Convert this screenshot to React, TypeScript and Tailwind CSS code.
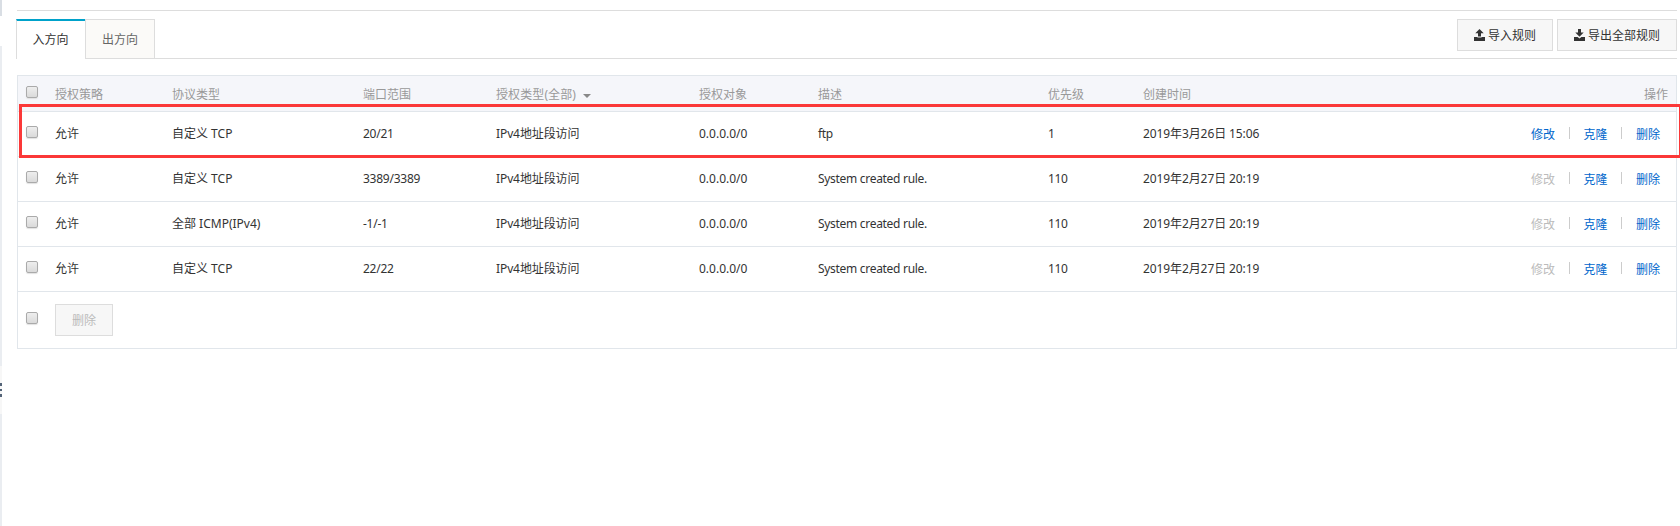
import React from "react";

type Rule = {
  protocol: string;
  port: string;
  description: string;
  priority: string;
  created: string;
  editable: boolean;
};

const rules: Rule[] = [
  { protocol: "自定义 TCP", port: "20/21", description: "ftp", priority: "1", created: "2019年3月26日 15:06", editable: true },
  { protocol: "自定义 TCP", port: "3389/3389", description: "System created rule.", priority: "110", created: "2019年2月27日 20:19", editable: false },
  { protocol: "全部 ICMP(IPv4)", port: "-1/-1", description: "System created rule.", priority: "110", created: "2019年2月27日 20:19", editable: false },
  { protocol: "自定义 TCP", port: "22/22", description: "System created rule.", priority: "110", created: "2019年2月27日 20:19", editable: false },
];

const columns = "grid grid-cols-[37px_117px_191px_133px_203px_119px_230px_95px_1fr]";

function Checkbox({ className = "" }: { className?: string }) {
  return (
    <input
      type="checkbox"
      className={`ml-2 block size-3 appearance-none rounded-[2px] border border-[#aaaaaa] bg-linear-to-b from-[#eeeeee] to-[#dadada] shadow-[0_1px_1px_#e2e2e2] ${className}`}
    />
  );
}

function TransferIcon({ down = false }: { down?: boolean }) {
  return (
    <svg width="12" height="12" viewBox="0 0 12 12" fill="#333" className="shrink-0">
      <path d={down ? "M4 0h3v3.5h2.7L5.5 7.7 1.3 3.5H4z" : "M5.5 0l4.2 4.2H7V7.4H4V4.2H1.3z"} />
      <path d={down ? "M0 8h3.6L5.5 9.4 7.4 8H11v4H0z" : "M0 8h3.4v.6h4.2V8H11v4H0z"} />
    </svg>
  );
}

function Separator() {
  return <span className="-mt-[5px] h-3 w-px bg-[#cccccc]" />;
}

function RuleRow({ rule }: { rule: Rule }) {
  return (
    <div className={`${columns} h-[45px] border-b border-[#e1e6eb] leading-[18px]`}>
      <Checkbox className="mt-[14px]" />
      <span className="pt-[13px]">允许</span>
      <span className="pt-[13px]">{rule.protocol}</span>
      <span className="pt-[13px] tracking-[-0.25px]">{rule.port}</span>
      <span className="pt-[13px] tracking-[-0.1px]">IPv4地址段访问</span>
      <span className="pt-[13px]">0.0.0.0/0</span>
      <span className="pt-[13px] tracking-[-0.3px]">{rule.description}</span>
      <span className="pt-[13px] tracking-[-0.35px]">{rule.priority}</span>
      <div className="flex justify-between">
        <span className="pt-[13px] tracking-[-0.1px]">{rule.created}</span>
        <div className="mt-[14px] mr-4 flex h-[18px] w-[129px] items-center justify-between text-[#0066cc]">
          <a className={rule.editable ? "" : "text-[#bbbbbb]"}>修改</a>
          <Separator />
          <a>克隆</a>
          <Separator />
          <a>删除</a>
        </div>
      </div>
    </div>
  );
}

export default function App() {
  return (
    <div className="flex h-[526px] w-[1680px] overflow-hidden bg-white font-['Noto_Sans','Noto_Sans_CJK_SC',sans-serif] text-[12px] text-[#333333]">
      <aside className="flex w-0.5 shrink-0 flex-col">
        <div className="h-4 bg-[#d9dee4]" />
        <div className="h-[30px]" />
        <div className="h-80 bg-[#eaedf1]" />
        <div className="flex h-12 flex-col gap-[3px] bg-[#f7f7f7] pt-[17px]">
          <span className="h-[3px] bg-[#546478]" />
          <span className="h-[2px] bg-[#546478]" />
          <span className="h-[3px] bg-[#546478]" />
        </div>
        <div className="flex-1 bg-[#eaedf1]" />
      </aside>

      <main className="relative flex-1 pt-[10px]">
        <div className="mr-[3px] ml-[15px] border-t border-[#dddddd] pt-2">
          <div className="-ml-px flex h-10">
            <div className="flex h-10 w-[69px] items-center justify-center border-t-2 border-l border-l-[#dddddd] border-t-[#00a2ca] bg-white pr-px">
              入方向
            </div>
            <div className="flex h-10 w-[70px] items-center justify-center border border-[#dddddd] bg-[#fbfaf8] pt-[2px] text-[#666666]">
              出方向
            </div>
            <div className="flex flex-1 justify-end gap-1 border-b border-[#dddddd]">
              <button className="flex h-8 w-24 items-center justify-center gap-[2px] border border-[#dddddd] bg-[#f7f7f7]">
                <TransferIcon />
                <span className="pt-[2px]">导入规则</span>
              </button>
              <button className="flex h-8 w-[120px] items-center justify-center gap-[2px] border border-[#dddddd] bg-[#f7f7f7]">
                <TransferIcon down />
                <span className="pt-[2px]">导出全部规则</span>
              </button>
            </div>
          </div>
        </div>

        <section className="mt-4 mr-[3px] ml-[15px] h-[274px] border border-[#e1e6eb]">
          <div className={`${columns} h-9 border-b border-[#e1e6eb] bg-[#f5f6fa] leading-[18px] text-[#999999]`}>
            <Checkbox className="mt-[10px]" />
            <span className="pt-[10px]">授权策略</span>
            <span className="pt-[10px]">协议类型</span>
            <span className="pt-[10px]">端口范围</span>
            <span className="flex h-7 items-center gap-[7px] pt-[10px] tracking-[0.1px]">
              授权类型(全部)
              <span className="mt-px border-x-4 border-t-4 border-x-transparent border-t-[#888888]" />
            </span>
            <span className="pt-[10px]">授权对象</span>
            <span className="pt-[10px]">描述</span>
            <span className="pt-[10px]">优先级</span>
            <div className="flex justify-between pt-[10px] pr-2">
              <span>创建时间</span>
              <span>操作</span>
            </div>
          </div>
          {rules.map((rule, index) => (
            <RuleRow key={index} rule={rule} />
          ))}
          <div className={columns}>
            <Checkbox className="mt-5" />
            <button className="mt-3 h-8 w-[58px] border border-[#dddddd] bg-[#f7f7f7] pt-[2px] text-[#bbbbbb]">删除</button>
          </div>
        </section>

        <div className="pointer-events-none absolute top-[104px] left-[17px] h-[54px] w-[1663px] border-[3px] border-[#fb3838]" />
      </main>
    </div>
  );
}
